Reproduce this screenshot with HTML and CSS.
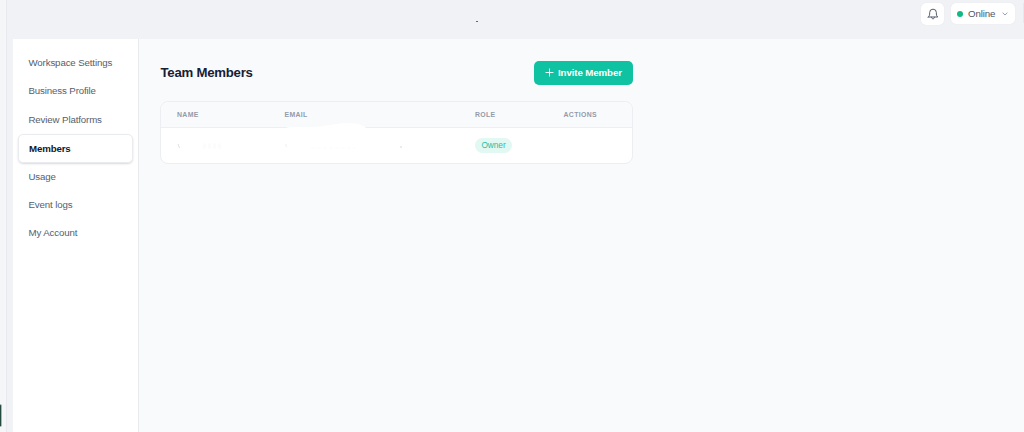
FILE: index.html
```html
<!DOCTYPE html>
<html lang="en">
<head>
<meta charset="utf-8">
<title>Team Members</title>
<link rel="stylesheet" href="styles.css">
</head>
<body>
<div class="app">
  <div class="rail"><span class="rail-tab"></span></div>
  <div class="shell">
    <header class="topbar">
      <span class="topbar-dot"></span>
      <button class="bell" aria-label="Notifications">
        <svg width="12" height="12" viewBox="0 0 24 24" fill="none" stroke="#4b5565" stroke-width="1.9" stroke-linecap="round" stroke-linejoin="round"><path d="M2.500 18h19c-1.800-1.600-2.800-3.400-2.800-6V9a6.700 6.700 0 0 0-13.400 0v3c0 2.600-1 4.400-2.800 6z"/><path d="M9 18.500c0 4.400 6 4.400 6 0"/></svg>
      </button>
      <button class="status">
        <span class="status-dot"></span><span class="status-text">Online</span>
        <svg width="6" height="4" viewBox="0 0 6 4" fill="none" stroke="#8d95a3" stroke-width="0.900"><path d="M.6.7 3 3 5.400.7"/></svg>
      </button>
      <span class="avatar-edge"></span>
    </header>
    <div class="body">
      <nav class="sidebar">
        <a class="item">Workspace Settings</a>
        <a class="item">Business Profile</a>
        <a class="item">Review Platforms</a>
        <a class="item active">Members</a>
        <a class="item">Usage</a>
        <a class="item">Event logs</a>
        <a class="item">My Account</a>
      </nav>
      <main class="main">
        <div class="heading">
          <h1>Team Members</h1>
          <button class="invite">
            <svg width="9" height="9" viewBox="0 0 9 9" stroke="#fff" stroke-width="0.900"><path d="M4.500.5v8M.5 4.500h8"/></svg>
            <span>Invite Member</span>
          </button>
        </div>
        <section class="table">
          <div class="row head"><span>NAME</span><span>EMAIL</span><span>ROLE</span><span>ACTIONS</span></div>
          <div class="row">
            <svg class="trace" width="280" height="36" viewBox="0 0 280 36" fill="none"><path d="M106 2c2-4 10-3 24-3 20 0 27-4 43-4 10 0 15 4 19 7z" fill="#fff"/><path d="M1 16l1.500 4" stroke="#dfe2e6"/><path d="M108.500 16l1 3" stroke="#f0f1f3"/><path d="M26 18h20" stroke="#fcfcfd" stroke-width="5" stroke-dasharray="3 2"/><path d="M224 18v2" stroke="#d5d8dc"/><path d="M134 20h44" stroke="#fbfbfc" stroke-dasharray="4 2"/></svg>
            <span></span><span></span><span><b class="badge">Owner</b></span><span></span>
          </div>
        </section>
      </main>
    </div>
  </div>
</div>
</body>
</html>
```
FILE: styles.css
```css
* { box-sizing: border-box; }
body { margin: 0; font-family: "Liberation Sans", Arial, sans-serif; background: #f1f2f6; }
button { font: inherit; border: 0; padding: 0; display: flex; align-items: center; text-align: left; }
h1 { margin: 0; }
svg { display: block; flex: none; }
.app { display: flex; height: 432px; overflow: hidden; }
.rail { width: 7px; background: #f5f6f8; border-right: 1px solid #e7e9ee; display: flex; align-items: flex-end; padding-bottom: 5px; }
.rail-tab { width: 2px; height: 23px; background: #24493f; border: 1px solid #a9b5b1; border-left: 0; border-radius: 0 2px 2px 0; }
.shell { flex: 1; padding-left: 6px; display: flex; flex-direction: column; }
.topbar { height: 39px; display: flex; align-items: flex-start; padding-top: 3px; }
.topbar-dot { width: 2px; height: 1px; background: #62666d; margin: 18px auto 0 463px; }
.bell { width: 23px; height: 22px; margin-right: 7px; background: #fff; border-radius: 5px; justify-content: center; box-shadow: 0 0 1px #d9dce2; }
.status { width: 64px; height: 21px; margin-right: 8px; background: #fff; border-radius: 5px; padding-left: 6px; box-shadow: 0 0 1px #d9dce2; }
.status-dot { width: 6px; height: 6px; border-radius: 3px; background: #12b886; margin-right: 5px; }
.status-text { font-size: 9.700px; line-height: 20px; color: #4b5565; width: 34px; letter-spacing: -.1px; }
.avatar-edge { width: 1px; height: 20px; background: #e7e8ec; }
.body { flex: 1; display: flex; }
.sidebar { width: 126px; background: #fff; border-right: 1px solid #e8eaee; padding: 10px 5px; display: flex; flex-direction: column; }
.item { height: 28.400px; padding-left: 10.500px; line-height: 28.800px; font-size: 9.700px; letter-spacing: -.13px; color: #555e6c; white-space: nowrap; }
.active { color: #111827; font-weight: 700; border: 1px solid #e9ebee; border-radius: 5px; box-shadow: 0 1px 2px #d8dade; line-height: 27px; padding-left: 10px; }
.main { flex: 1; background: #f9fafc; padding: 22px 0 0 21px; }
.heading { width: 473px; height: 24px; display: flex; align-items: center; justify-content: space-between; }
.heading h1 { padding-left: .5px; font-size: 13.200px; line-height: 24px; letter-spacing: -.24px; color: #172033; }
.invite { width: 99px; height: 24px; background: #0ec2a2; color: #fff; border-radius: 5px; padding-left: 11px; gap: 4px; font-size: 9.700px; letter-spacing: -.1px; font-weight: 700; line-height: 22px; padding-bottom: 1px; white-space: nowrap; }
.table { width: 473px; height: 63px; margin-top: 16px; background: #fff; border: 1px solid #eceef1; border-radius: 8px; }
.row { position: relative; height: 35px; display: grid; grid-template-columns: 107.500px 190.500px 88.500px 1fr; align-items: center; padding-left: 16px; }
.head { height: 26px; background: #f9fafc; border-bottom: 1px solid #edeff2; border-radius: 8px 8px 0 0; color: #949baa; font-size: 6.900px; font-weight: 700; letter-spacing: .34px; }
.badge { display: block; width: 37px; height: 15px; border-radius: 8px; background: #e2f8f3; color: #2cbda0; font-size: 8.300px; letter-spacing: -.05px; font-weight: 400; line-height: 15px; text-align: center; }
.trace { position: absolute; left: 16px; top: 0; overflow: visible; }
```
